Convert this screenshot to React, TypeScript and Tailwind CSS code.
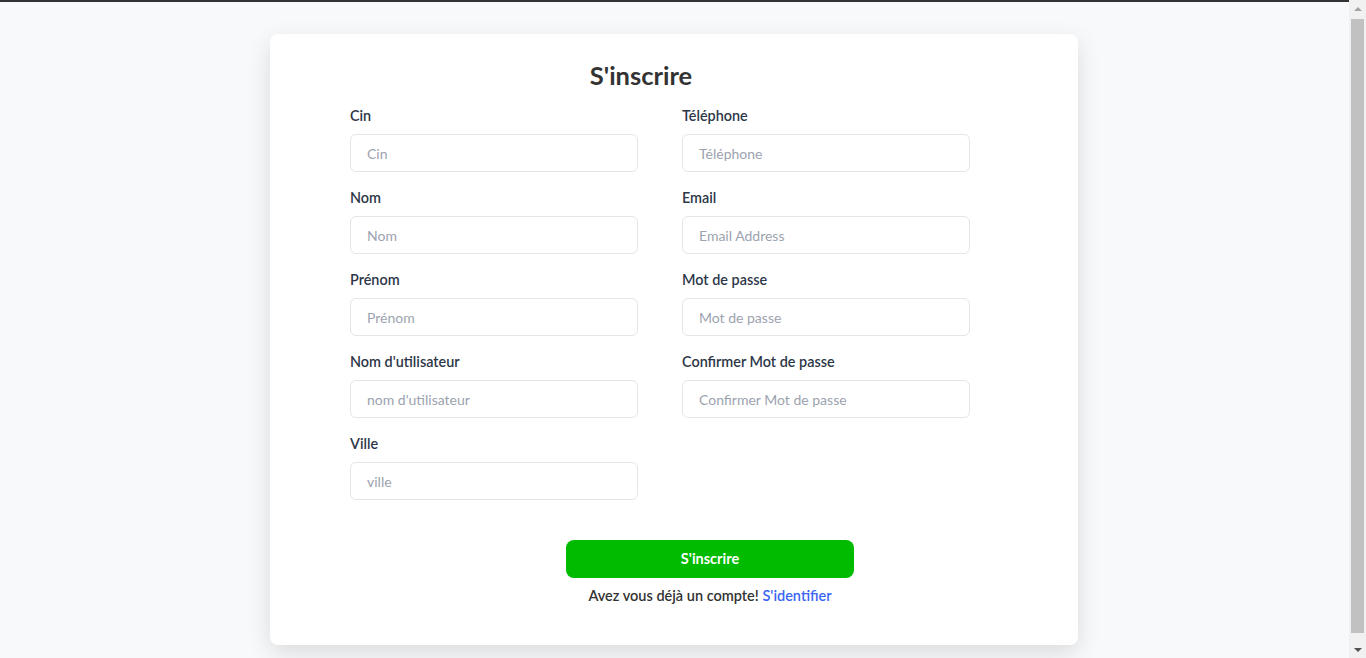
const left = [
  { label: "Cin", placeholder: "Cin" },
  { label: "Nom", placeholder: "Nom" },
  { label: "Prénom", placeholder: "Prénom" },
  { label: "Nom d'utilisateur", placeholder: "nom d'utilisateur" },
  { label: "Ville", placeholder: "ville" },
];

const right = [
  { label: "Téléphone", placeholder: "Téléphone" },
  { label: "Email", placeholder: "Email Address", type: "email" },
  { label: "Mot de passe", placeholder: "Mot de passe", type: "password" },
  { label: "Confirmer Mot de passe", placeholder: "Confirmer Mot de passe", type: "password" },
];

type Field = { label: string; placeholder: string; type?: string };

function FormField({ field }: { field: Field }) {
  return (
    <div className="flex flex-col">
      <label className="h-5 text-[14.4px] font-semibold leading-5 text-[#2d3748]">{field.label}</label>
      <input
        type={field.type ?? "text"}
        placeholder={field.placeholder}
        className="mt-2 h-[38px] w-full rounded-md border border-[#e2e5ea] bg-white px-4 text-sm text-[#2d3748] outline-none placeholder:text-[#9ca3af]"
      />
    </div>
  );
}

export default function App() {
  return (
    <div
      className="min-h-screen border-t-2 border-[#333] bg-[#f8f9fb] py-8 pr-[18px]"
      style={{ fontFamily: 'Lato, "Open Sans", sans-serif' }}
    >
      <div className="mx-auto w-[808px] rounded-lg bg-white pb-[39px] pt-[25px] shadow-[0_8px_24px_rgba(0,0,0,0.12)]">
        <h1 className="pr-[66px] text-center text-[25.5px] font-bold leading-8 text-[#333]">S'inscrire</h1>

        <div className="mt-[15px] grid grid-cols-[288px_288px] gap-x-[44px] pl-[80px]">
          <div className="flex flex-col gap-4">
            {left.map((f) => (
              <FormField key={f.label} field={f} />
            ))}
          </div>
          <div className="flex flex-col gap-4">
            {right.map((f) => (
              <FormField key={f.label} field={f} />
            ))}
          </div>
        </div>

        <div className="mt-10 flex flex-col items-center pl-[72px]">
          <button className="h-[38px] w-[288px] rounded-lg bg-[#00bb00] text-[14.5px] font-bold text-white">
            S'inscrire
          </button>
          <p className="mt-2 text-[14.5px] font-semibold leading-5 text-[#333]">
            Avez vous déjà un compte!{" "}
            <a href="#" className="text-[#3b66f5]">
              S'identifier
            </a>
          </p>
        </div>
      </div>

      {/* fake browser scrollbar */}
      <div className="fixed right-0 top-0 flex h-screen w-[17px] flex-col items-center bg-[#f1f1f1]">
        <div className="flex h-[17px] w-full items-center justify-center">
          <div className="h-0 w-0 border-x-[4px] border-b-[4px] border-x-transparent border-b-[#a3a3a3]" />
        </div>
        <div className="mt-[2px] h-[614px] w-[13px] bg-[#c1c1c1]" />
        <div className="mt-auto flex h-[17px] w-full items-center justify-center">
          <div className="h-0 w-0 border-x-[4px] border-t-[4px] border-x-transparent border-t-[#505050]" />
        </div>
      </div>
    </div>
  );
}
